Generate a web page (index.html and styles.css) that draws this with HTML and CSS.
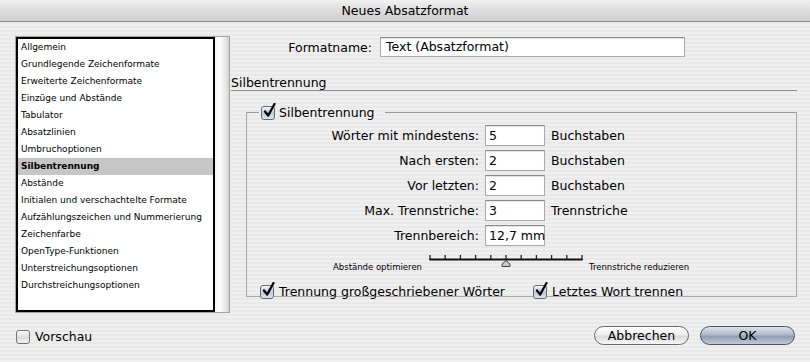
FILE: index.html
```html
<!DOCTYPE html>
<html lang="de">
<head>
    <meta charset="UTF-8">
    <title>Neues Absatzformat</title>
    <link rel="stylesheet" href="styles.css">
</head>
<body>

<div class="dialog">
    <div class="titlebar">Neues Absatzformat</div>

    <div class="content">
        <!-- Category list -->
        <div class="listframe">
            <ul class="list">
                <li>Allgemein</li>
                <li>Grundlegende Zeichenformate</li>
                <li>Erweiterte Zeichenformate</li>
                <li>Einzüge und Abstände</li>
                <li>Tabulator</li>
                <li>Absatzlinien</li>
                <li>Umbruchoptionen</li>
                <li class="selected">Silbentrennung</li>
                <li>Abstände</li>
                <li>Initialen und verschachtelte Formate</li>
                <li>Aufzählungszeichen und Nummerierung</li>
                <li>Zeichenfarbe</li>
                <li>OpenType-Funktionen</li>
                <li>Unterstreichungsoptionen</li>
                <li>Durchstreichungsoptionen</li>
            </ul>
            <div class="scrolltrack"></div>
        </div>

        <div class="main">
            <div class="name-row">
                <span class="name-label">Formatname:</span>
                <div class="field name-field">Text (Absatzformat)</div>
            </div>

            <div class="section">Silbentrennung</div>

            <fieldset class="group">
                <legend class="legend">
                    <span class="check on"><svg viewBox="0 0 14 16"><path d="M3 8.5 L6.2 12.5 L12.5 1"/></svg></span>
                    Silbentrennung
                </legend>

                <div class="fields">
                    <span class="label">Wörter mit mindestens:</span>
                    <div class="field">5</div>
                    <span class="unit">Buchstaben</span>

                    <span class="label">Nach ersten:</span>
                    <div class="field">2</div>
                    <span class="unit">Buchstaben</span>

                    <span class="label">Vor letzten:</span>
                    <div class="field">2</div>
                    <span class="unit">Buchstaben</span>

                    <span class="label">Max. Trennstriche:</span>
                    <div class="field">3</div>
                    <span class="unit">Trennstriche</span>

                    <span class="label">Trennbereich:</span>
                    <div class="field">12,7 mm</div>
                    <span class="unit"></span>
                </div>

                <!-- Spacing / hyphens slider -->
                <div class="slider">
                    <span class="slider-label left">Abstände optimieren</span>
                    <svg class="ticks" width="154" height="13" viewBox="0 0 154 13">
                        <path d="M1 0 V5 M16.2 0 V5 M31.4 0 V5 M46.6 0 V5 M61.8 0 V5 M77 0 V5 M92.2 0 V5 M107.4 0 V5 M122.6 0 V5 M137.8 0 V5 M153 0 V5" stroke="#222" stroke-width="1.3" fill="none"/>
                        <path d="M0.5 4.5 H153.5" stroke="#111" stroke-width="2"/>
                        <path d="M73 11.5 V9 L77 5.5 L81 9 V11.5 Z" fill="#c9c9c9" stroke="#444" stroke-width="1"/>
                    </svg>
                    <span class="slider-label">Trennstriche reduzieren</span>
                </div>

                <div class="options">
                    <label class="option">
                        <span class="check on"><svg viewBox="0 0 14 16"><path d="M3 8.5 L6.2 12.5 L12.5 1"/></svg></span>
                        Trennung großgeschriebener Wörter
                    </label>
                    <label class="option last">
                        <span class="check on"><svg viewBox="0 0 14 16"><path d="M3 8.5 L6.2 12.5 L12.5 1"/></svg></span>
                        Letztes Wort trennen
                    </label>
                </div>
            </fieldset>
        </div>
    </div>

    <div class="footer">
        <label class="option">
            <span class="check"></span>
            Vorschau
        </label>
        <div class="buttons">
            <button class="btn">Abbrechen</button>
            <button class="btn default">OK</button>
        </div>
    </div>
</div>

</body>
</html>
```

FILE: styles.css
```css
body {
    margin: 0;
    padding: 0;
    font-family: "DejaVu Sans", Verdana, sans-serif;
    font-size: 12.5px;
    color: #000;
    background: #ececec;
}
.dialog {
    width: 810px;
    height: 362px;
    overflow: hidden;
    background: repeating-linear-gradient(#efefef 0, #efefef 2px, #e9e9e9 2px, #e9e9e9 4px);
}
.titlebar {
    height: 21px;
    line-height: 21px;
    text-align: center;
    border-bottom: 1px solid #8c8c8c;
    border-radius: 6px 6px 0 0;
    background: linear-gradient(#f2f2f2, #dcdcdc 50%, #cfcfcf);
}

.content {
    display: flex;
    padding: 14px 0 0 15px;
}

/* list */
.listframe {
    display: flex;
    width: 213px;
    height: 275px;
    border: 1px solid #a3a3a3;
    background: #fff;
}
.list {
    list-style: none;
    margin: 0;
    padding: 0;
    width: 195px;
    border: 2px solid #000;
    background: #fff;
    font-size: 9px;
}
.list li {
    height: 17px;
    line-height: 17px;
    padding-left: 3px;
    white-space: nowrap;
}
.list li.selected {
    background: #c6c6c6;
    font-weight: bold;
}
.scrolltrack {
    flex: 1;
    background: linear-gradient(90deg, #f4f4f4, #ffffff 30%, #e4e4e4 80%, #cfcfcf);
}

/* right side */
.main {
    width: 566px;
    padding-left: 1px;
}
.name-row {
    display: flex;
    align-items: center;
    gap: 8px;
    margin-top: 1px;
}
.name-label {
    width: 141px;
    text-align: right;
}
.field {
    box-sizing: border-box;
    height: 21px;
    line-height: 19px;
    padding-left: 3px;
    background: #fff;
    border: 1px solid #a9a9a9;
    border-top-color: #8a8a8a;
    box-shadow: inset 0 1px 1px rgba(0, 0, 0, 0.12);
    white-space: nowrap;
}
.name-field {
    width: 305px;
    height: 20px;
    line-height: 18px;
    padding-left: 5px;
}
.section {
    margin-top: 14px;
    height: 19px;
    line-height: 23px;
    border-bottom: 1px solid #8e8e8e;
}

.group {
    margin: 14px 0 0 15px;
    padding: 0 0 11px 0;
    border: 1px solid #a9a9a9;
    border-top-color: #9a9a9a;
    min-width: 0;
    height: 192px;
    box-sizing: border-box;
}
.legend {
    margin-left: 12px;
    padding: 0 10px 0 2px;
    display: flex;
    align-items: center;
    gap: 4px;
}

.fields {
    display: grid;
    grid-template-columns: 232px 60px auto;
    grid-auto-rows: 21px;
    column-gap: 6px;
    row-gap: 4px;
    align-items: center;
    margin-top: 5px;
}
.label {
    text-align: right;
}
.unit {
    white-space: nowrap;
}

.slider {
    display: flex;
    align-items: flex-start;
    margin-top: 9px;
}
.slider-label {
    font-size: 8.5px;
    margin-top: 7px;
    white-space: nowrap;
}
.slider-label.left {
    width: 175px;
    text-align: right;
}
.ticks {
    margin: 0 6px 0 7px;
}

.options {
    display: flex;
    margin-top: 12px;
    padding-left: 13px;
}
.option {
    display: flex;
    align-items: center;
    gap: 5px;
    white-space: nowrap;
}
.option.last {
    margin-left: 28px;
}

/* aqua checkbox */
.check {
    position: relative;
    display: inline-block;
    width: 12px;
    height: 12px;
    border: 1px solid #727272;
    border-radius: 3px;
    background: linear-gradient(#fbfbfb, #dcdcdc 55%, #f2f2f2);
    box-shadow: inset 0 1px 1px rgba(255, 255, 255, 0.8);
    flex: none;
}
.check.on {
    background: linear-gradient(#eef2f6, #bcc8d6 55%, #dfe6ee);
    border-color: #5f6a76;
}
.check svg {
    position: absolute;
    left: 0;
    top: -4px;
    width: 14px;
    height: 16px;
}
.check svg path {
    stroke: #000;
    stroke-width: 2.3;
    fill: none;
    stroke-linecap: round;
    stroke-linejoin: round;
}

/* footer */
.footer {
    display: flex;
    justify-content: space-between;
    align-items: center;
    padding: 13px 15px 0 16px;
}
.footer .option {
    margin-top: 2px;
}
.buttons {
    display: flex;
    gap: 11px;
}
.btn {
    font-family: "DejaVu Sans", Verdana, sans-serif;
    font-size: 12.5px;
    height: 19px;
    padding: 0;
    border: 1px solid #6a6a6a;
    border-radius: 10px;
    background: linear-gradient(#ffffff, #ededed 45%, #dadada 55%, #f7f7f7);
    color: #000;
    line-height: 16px;
    width: 95px;
}
.btn.default {
    border-color: #4c5663;
    background: linear-gradient(#dde3ea, #aebbc9 45%, #8f9fb2 55%, #bfcad6);
}
```
